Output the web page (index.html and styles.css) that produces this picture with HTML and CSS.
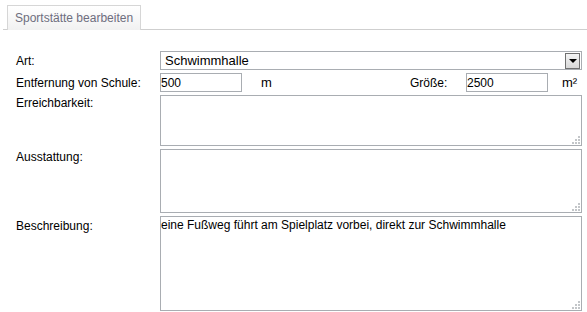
FILE: index.html
```html
<!DOCTYPE html>
<html lang="de">
<head>
    <meta charset="UTF-8">
    <meta name="viewport" content="width=device-width, initial-scale=1.0">
    <title>Sportstätte bearbeiten</title>
    <link rel="stylesheet" href="styles.css">
</head>
<body>
    <div class="tabs">
        <div class="tab">Sportstätte bearbeiten</div>
    </div>

    <form class="form">
        <label class="label">Art:</label>
        <div class="select">
            <span class="select-value">Schwimmhalle</span>
            <span class="select-button"><span class="arrow"></span></span>
        </div>

        <label class="label">Entfernung von Schule:</label>
        <div class="row">
            <input class="input" type="text" value="500">
            <span class="unit">m</span>
            <span class="label-inline">Größe:</span>
            <input class="input" type="text" value="2500">
            <span class="unit unit-last">m²</span>
        </div>

        <label class="label label-top">Erreichbarkeit:</label>
        <div class="area-wrap">
            <textarea class="area area-small"></textarea>
            <svg class="grip" width="9" height="9" viewBox="0 0 9 9"><g fill="#c3c6c9"><rect x="6" y="0" width="2" height="2"/><rect x="3" y="3" width="2" height="2"/><rect x="6" y="3" width="2" height="2"/><rect x="0" y="6" width="2" height="2"/><rect x="3" y="6" width="2" height="2"/><rect x="6" y="6" width="2" height="2"/></g></svg>
        </div>

        <label class="label label-top">Ausstattung:</label>
        <div class="area-wrap">
            <textarea class="area area-medium"></textarea>
            <svg class="grip" width="9" height="9" viewBox="0 0 9 9"><g fill="#c3c6c9"><rect x="6" y="0" width="2" height="2"/><rect x="3" y="3" width="2" height="2"/><rect x="6" y="3" width="2" height="2"/><rect x="0" y="6" width="2" height="2"/><rect x="3" y="6" width="2" height="2"/><rect x="6" y="6" width="2" height="2"/></g></svg>
        </div>

        <label class="label label-top label-desc">Beschreibung:</label>
        <div class="area-wrap">
            <textarea class="area area-large">eine Fußweg führt am Spielplatz vorbei, direkt zur Schwimmhalle</textarea>
            <svg class="grip" width="9" height="9" viewBox="0 0 9 9"><g fill="#c3c6c9"><rect x="6" y="0" width="2" height="2"/><rect x="3" y="3" width="2" height="2"/><rect x="6" y="3" width="2" height="2"/><rect x="0" y="6" width="2" height="2"/><rect x="3" y="6" width="2" height="2"/><rect x="6" y="6" width="2" height="2"/></g></svg>
        </div>
    </form>
</body>
</html>
```

FILE: styles.css
```css
body {
  margin: 0;
  background: #fff;
  font-family: "Liberation Sans", Arial, sans-serif;
  font-size: 12px;
  color: #000;
}

.tabs {
  margin: 5px 0 0 3px;
  padding-left: 4px;
  border-bottom: 1px solid #cfcfcf;
  display: flex;
}

.tab {
  height: 24px;
  line-height: 24px;
  padding: 0 7px;
  border: 1px solid #d6d6d6;
  border-bottom: none;
  background: linear-gradient(#ffffff, #f1f1f1);
  color: #6e6e7e;
  margin-bottom: -1px;
  box-sizing: content-box;
}

.form {
  display: grid;
  grid-template-columns: 144px 1fr;
  row-gap: 3px;
  padding: 21px 5px 0 16px;
  margin: 0;
}

.label {
  align-self: center;
  line-height: 14px;
}

.label-top {
  align-self: start;
  padding-top: 1px;
}

.label-desc {
  padding-top: 3px;
}

.select {
  display: flex;
  align-items: center;
  height: 19px;
  box-sizing: border-box;
  border: 1px solid #a9adb2;
  background: #fff;
}

.select-value {
  flex: 1;
  padding-left: 4px;
  font-size: 13px;
}

.select-button {
  width: 15px;
  height: 16px;
  margin-right: 1px;
  box-sizing: border-box;
  border: 1px solid #707070;
  background: linear-gradient(#f4f4f4, #d8d8d8);
  display: flex;
  align-items: center;
  justify-content: center;
}

.arrow {
  width: 0;
  height: 0;
  border-left: 4px solid transparent;
  border-right: 4px solid transparent;
  border-top: 4px solid #000;
  margin-top: 1px;
}

.row {
  display: flex;
  align-items: center;
  height: 19px;
}

.input {
  width: 82px;
  height: 19px;
  box-sizing: border-box;
  border: 1px solid #a9adb2;
  padding: 0;
  margin: 0;
  font-family: inherit;
  font-size: 12px;
  color: #000;
  outline: none;
}

.unit {
  width: 168px;
  box-sizing: border-box;
  padding-left: 19px;
  font-size: 13px;
}

.unit-last {
  width: auto;
  padding-left: 14px;
}

.label-inline {
  width: 56px;
}

.area-wrap {
  position: relative;
  display: flex;
}

.area {
  flex: 1;
  box-sizing: border-box;
  border: 1px solid #a9adb2;
  padding: 1px 0 0 0;
  margin: 0;
  font-family: inherit;
  font-size: 12px;
  line-height: 15px;
  color: #000;
  resize: none;
  outline: none;
}

.area-small {
  height: 51px;
}

.area-medium {
  height: 64px;
}

.area-large {
  height: 95px;
}

.grip {
  position: absolute;
  right: 1px;
  bottom: 1px;
}
```
